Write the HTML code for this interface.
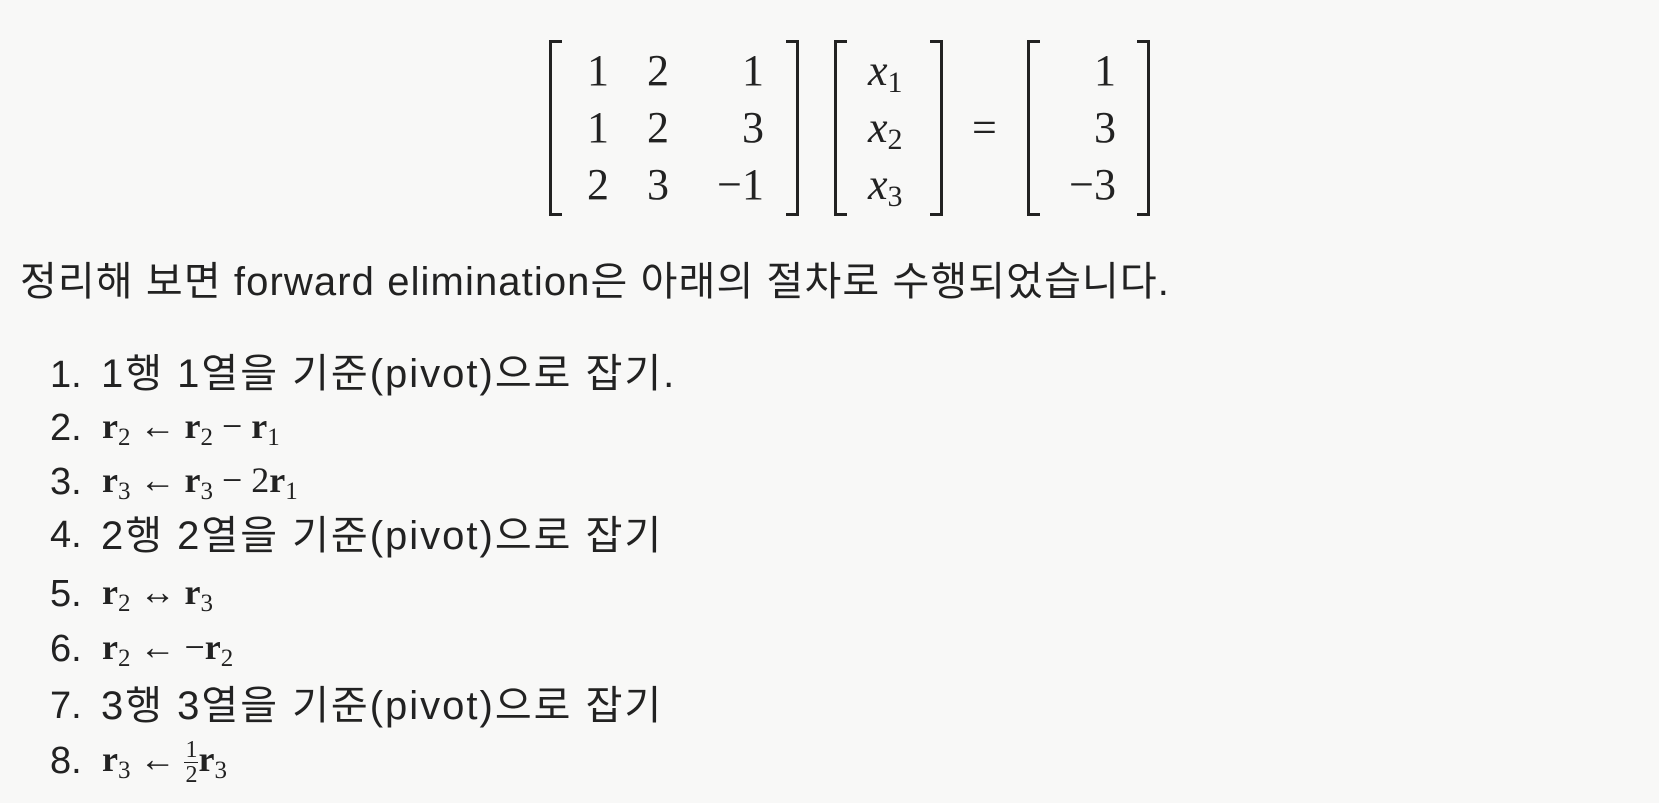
<!DOCTYPE html>
<html><head><meta charset="utf-8"><style>
body{margin:0;width:1659px;height:803px;background:#f8f8f7;color:#222;overflow:hidden;position:relative}
.m{position:absolute;font-family:"Liberation Serif",serif;font-size:44px;line-height:1;white-space:nowrap}
.r{text-align:right;width:100px}
.br{position:absolute;border:3px solid #222;width:10px}
.bl{border-right:none}.bR{border-left:none}
.t{position:absolute;font-family:"Liberation Sans","Noto Sans CJK KR",sans-serif;font-size:40px;line-height:1;white-space:nowrap;letter-spacing:1.1px}
.n{position:absolute;left:50px;font-family:"Liberation Sans","Noto Sans CJK KR",sans-serif;font-size:38px;line-height:1}
.x{position:absolute;left:102px;font-family:"Liberation Serif",serif;font-size:36px;line-height:1;white-space:nowrap}
.x b{font-weight:bold}
sub{font-size:25px;vertical-align:-7px;line-height:0}
.m sub{font-size:30px}
i{font-style:italic}
</style></head><body>
<div class="br bl" style="left:549px;top:40px;height:170px"></div>
<div class="br bR" style="left:786px;top:40px;height:170px"></div>
<div class="m" style="left:587px;top:49px">1</div><div class="m" style="left:647px;top:49px">2</div><div class="m r" style="left:664px;top:49px">1</div>
<div class="m" style="left:587px;top:106px">1</div><div class="m" style="left:647px;top:106px">2</div><div class="m r" style="left:664px;top:106px">3</div>
<div class="m" style="left:587px;top:163px">2</div><div class="m" style="left:647px;top:163px">3</div><div class="m r" style="left:664px;top:163px">−1</div>
<div class="br bl" style="left:834px;top:40px;height:170px"></div>
<div class="br bR" style="left:930px;top:40px;height:170px"></div>
<div class="m" style="left:868px;top:49px"><i>x</i><sub>1</sub></div>
<div class="m" style="left:868px;top:106px"><i>x</i><sub>2</sub></div>
<div class="m" style="left:868px;top:163px"><i>x</i><sub>3</sub></div>
<div class="m" style="left:972px;top:106px">=</div>
<div class="br bl" style="left:1027px;top:40px;height:170px"></div>
<div class="br bR" style="left:1137px;top:40px;height:170px"></div>
<div class="m r" style="left:1016px;top:49px">1</div>
<div class="m r" style="left:1016px;top:106px">3</div>
<div class="m r" style="left:1016px;top:163px">−3</div>
<div class="t" style="left:20px;top:262px">정리해 보면 forward elimination은 아래의 절차로 수행되었습니다.</div>
<div class="n" style="top:356px">1.</div><div class="t" style="left:101px;top:354px;letter-spacing:2px">1행 1열을 기준(pivot)으로 잡기.</div>
<div class="n" style="top:409px">2.</div><div class="x" style="top:408px"><b>r</b><sub>2</sub> ← <b>r</b><sub>2</sub> − <b>r</b><sub>1</sub></div>
<div class="n" style="top:463px">3.</div><div class="x" style="top:462px"><b>r</b><sub>3</sub> ← <b>r</b><sub>3</sub> − 2<b>r</b><sub>1</sub></div>
<div class="n" style="top:516px">4.</div><div class="t" style="left:101px;top:516px;letter-spacing:2px">2행 2열을 기준(pivot)으로 잡기</div>
<div class="n" style="top:575px">5.</div><div class="x" style="top:574px"><b>r</b><sub>2</sub> ↔ <b>r</b><sub>3</sub></div>
<div class="n" style="top:630px">6.</div><div class="x" style="top:629px"><b>r</b><sub>2</sub> ← −<b>r</b><sub>2</sub></div>
<div class="n" style="top:687px">7.</div><div class="t" style="left:101px;top:686px;letter-spacing:2px">3행 3열을 기준(pivot)으로 잡기</div>
<div class="n" style="top:742px">8.</div><div class="x" style="top:738px"><b>r</b><sub>3</sub> ← <span style="display:inline-block;vertical-align:middle;text-align:center;font-size:24px;line-height:1"><span style="display:block;border-bottom:1.5px solid #222;padding:0 1px">1</span><span style="display:block">2</span></span><b>r</b><sub>3</sub></div>
</body></html>
